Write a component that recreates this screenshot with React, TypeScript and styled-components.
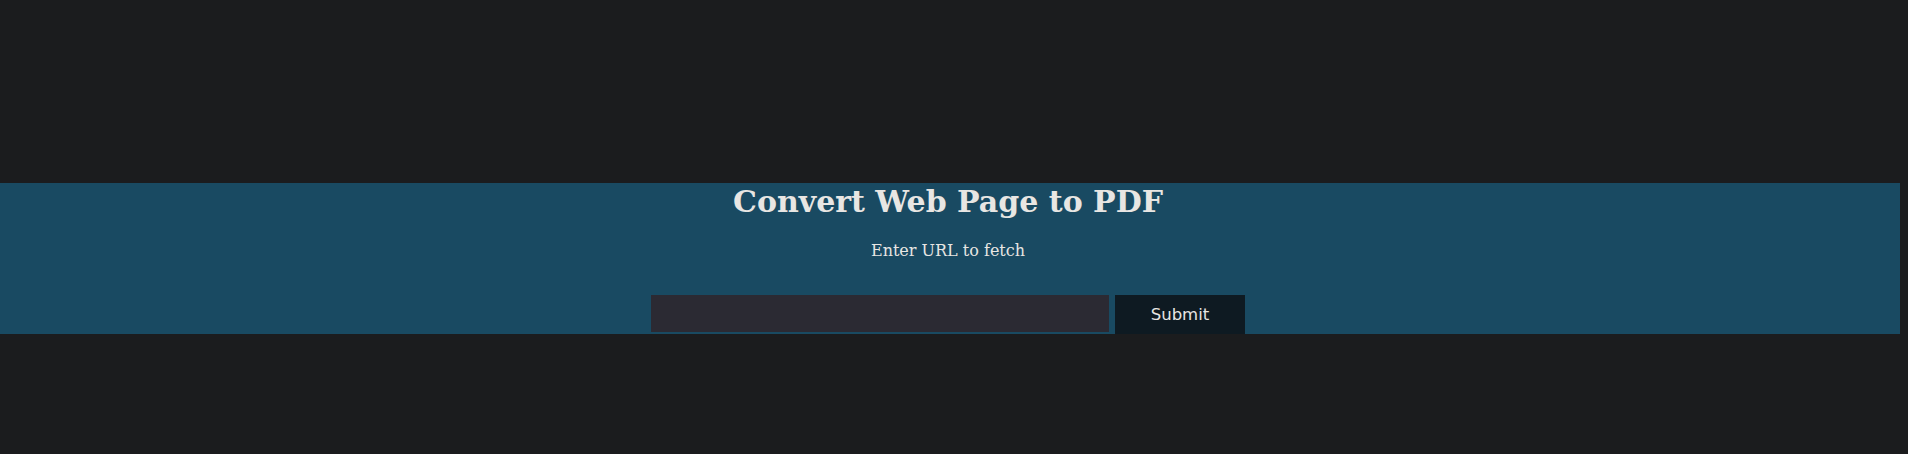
import React from "react";
import styled, { createGlobalStyle } from "styled-components";

const Global = createGlobalStyle`
  html, body {
    margin: 0;
    padding: 0;
    background: #1b1c1e;
  }
  body {
    font-family: "DejaVu Serif", serif;
    color: #e8e6e3;
  }
`;

const Page = styled.div`
  padding-top: 183px;
  height: 454px;
  box-sizing: border-box;
`;

const Band = styled.section`
  width: 1900px;
  height: 151px;
  box-sizing: border-box;
  padding-right: 4px;
  overflow: hidden;
  background: #194a62;
  display: flex;
  flex-direction: column;
  align-items: center;
`;

const Title = styled.h1`
  margin: 0;
  font-family: "DejaVu Serif", serif;
  font-weight: bold;
  font-size: 30px;
  line-height: 37px;
  color: #e8e6e3;
`;

const Subtitle = styled.p`
  margin: 21px 0 0;
  font-family: "DejaVu Serif", serif;
  font-size: 16px;
  line-height: 19px;
  color: #e8e6e3;
`;

const Form = styled.form`
  margin-top: 35px;
  display: flex;
  gap: 6px;
  align-items: flex-start;
`;

const UrlInput = styled.input`
  width: 458px;
  height: 37px;
  box-sizing: border-box;
  border: none;
  background: #2b2a33;
  color: #e8e6e3;
  padding: 0 8px;
  font-family: "DejaVu Sans", sans-serif;
  font-size: 16px;
  outline: none;
`;

const SubmitButton = styled.button`
  width: 130px;
  height: 44px;
  box-sizing: border-box;
  border: none;
  background: #0e1a22;
  color: #e8e6e3;
  font-family: "DejaVu Sans", sans-serif;
  font-size: 16.5px;
  padding: 0 0 5px;
  cursor: pointer;
`;

export default function App() {
  return (
    <>
      <Global />
      <Page>
        <Band>
          <Title>Convert Web Page to PDF</Title>
          <Subtitle>Enter URL to fetch</Subtitle>
          <Form onSubmit={(e) => e.preventDefault()}>
            <UrlInput type="text" aria-label="URL" />
            <SubmitButton type="submit">Submit</SubmitButton>
          </Form>
        </Band>
      </Page>
    </>
  );
}
